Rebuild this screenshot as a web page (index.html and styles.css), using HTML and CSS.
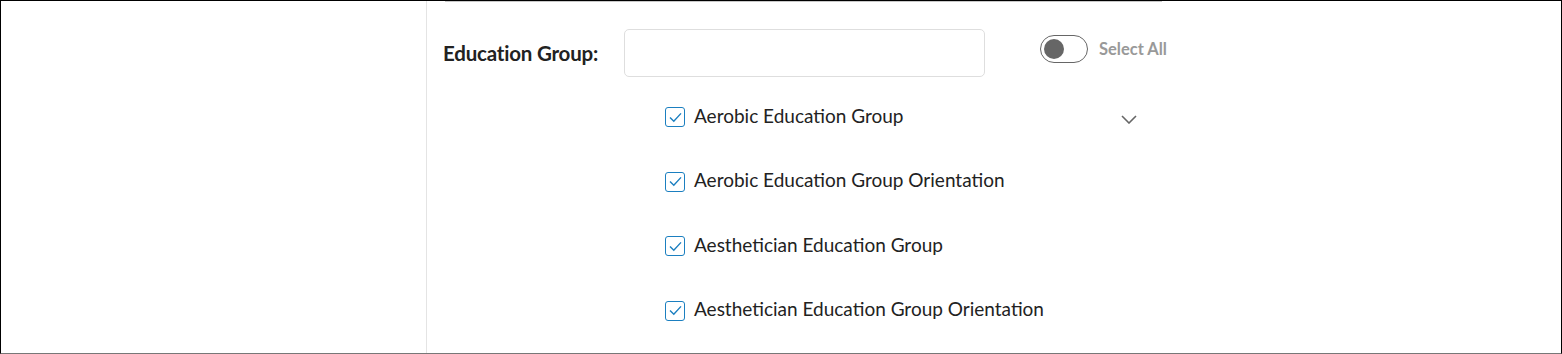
FILE: index.html
```html
<!DOCTYPE html>
<html lang="en">
<head>
    <meta charset="UTF-8">
    <meta name="viewport" content="width=device-width, initial-scale=1.0">
    <title>Education Group</title>
    <link rel="stylesheet" href="styles.css">
</head>
<body>
    <div class="frame">
        <div class="side-column"></div>
        <div class="form-column">
            <div class="top-rule"></div>
            <div class="field-row">
                <label class="field-label" for="edu-group">Education Group:</label>
                <input id="edu-group" class="field-input" type="text">
                <div class="toggle-group">
                    <span class="toggle"><span class="knob"></span></span>
                    <span class="toggle-label">Select All</span>
                </div>
            </div>
            <div class="options-wrap">
                <div class="options-list">
                    <div class="option">
                        <span class="checkbox"><svg viewBox="0 0 17 17" width="17" height="17"><path d="M3 8.6 L6.8 12.3 L14 4.4" fill="none" stroke="#1b7fc0" stroke-width="1.4"/></svg></span>
                        <span class="option-text">Aerobic Education Group</span>
                    </div>
                    <div class="option">
                        <span class="checkbox"><svg viewBox="0 0 17 17" width="17" height="17"><path d="M3 8.6 L6.8 12.3 L14 4.4" fill="none" stroke="#1b7fc0" stroke-width="1.4"/></svg></span>
                        <span class="option-text">Aerobic Education Group Orientation</span>
                    </div>
                    <div class="option">
                        <span class="checkbox"><svg viewBox="0 0 17 17" width="17" height="17"><path d="M3 8.6 L6.8 12.3 L14 4.4" fill="none" stroke="#1b7fc0" stroke-width="1.4"/></svg></span>
                        <span class="option-text">Aesthetician Education Group</span>
                    </div>
                    <div class="option">
                        <span class="checkbox"><svg viewBox="0 0 17 17" width="17" height="17"><path d="M3 8.6 L6.8 12.3 L14 4.4" fill="none" stroke="#1b7fc0" stroke-width="1.4"/></svg></span>
                        <span class="option-text">Aesthetician Education Group Orientation</span>
                    </div>
                </div>
                <svg class="chevron" viewBox="0 0 16 9" width="16" height="9"><path d="M1 1 L8 8 L15 1" fill="none" stroke="#666" stroke-width="1.6"/></svg>
            </div>
        </div>
    </div>
</body>
</html>
```

FILE: styles.css
```css
body {
    margin: 0;
    font-family: Lato, "Open Sans", sans-serif;
    background: #fff;
    color: #222;
}
.frame {
    width: 1562px;
    height: 354px;
    box-sizing: border-box;
    border: 1px solid #000;
    border-bottom-color: #777;
    display: flex;
    overflow: hidden;
}
.side-column {
    width: 425px;
    border-right: 1px solid #e4e4e4;
}
.form-column {
    padding-left: 16px;
}
.top-rule {
    margin-left: 2px;
    width: 717px;
    border-top: 1px solid #c8c8c8;
}
.field-row {
    display: flex;
    align-items: center;
    margin-top: 27px;
    height: 48px;
}
.field-label {
    width: 181px;
    font-size: 20.5px;
    font-weight: bold;
    color: #222;
    letter-spacing: -0.2px;
}
.field-input {
    width: 361px;
    height: 48px;
    box-sizing: border-box;
    border: 1px solid #dedede;
    border-radius: 5px;
    outline: none;
}
.toggle-group {
    display: flex;
    align-items: center;
    margin-left: 55px;
    margin-top: -8px;
}
.toggle {
    width: 48px;
    height: 28px;
    box-sizing: border-box;
    border: 1px solid #666;
    border-radius: 14px;
    display: flex;
    align-items: center;
    padding-left: 3px;
}
.knob {
    width: 20px;
    height: 20px;
    border-radius: 50%;
    background: #666;
}
.toggle-label {
    margin-left: 11px;
    font-size: 16.5px;
    font-weight: bold;
    color: #999;
}
.options-wrap {
    display: flex;
    margin-left: 222px;
    margin-top: 8px;
    width: 480px;
}
.options-list {
    flex: 1;
}
.option {
    height: 64.5px;
    display: flex;
    align-items: center;
}
.checkbox {
    width: 20px;
    height: 20px;
    box-sizing: border-box;
    border: 1.5px solid #1b7fc0;
    border-radius: 3px;
    display: flex;
    align-items: center;
    justify-content: center;
    overflow: hidden;
}
.checkbox svg {
    flex: none;
}
.option-text {
    margin-left: 9px;
    margin-top: -4px;
    font-size: 19px;
    color: #222;
}
.chevron {
    margin-top: 30px;
    margin-right: 8px;
}
```
